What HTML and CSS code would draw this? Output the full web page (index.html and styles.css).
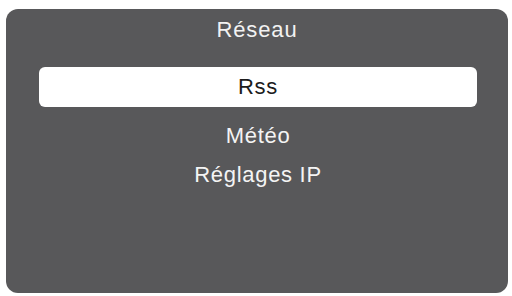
FILE: index.html
```html
<!DOCTYPE html>
<html>
<head>
<meta charset="utf-8">
<link rel="stylesheet" href="styles.css">
</head>
<body>
<div class="panel">
  <div class="title">Réseau</div>
  <div class="list">
    <div class="item selected">Rss</div>
    <div class="item first">Météo</div>
    <div class="item">Réglages IP</div>
  </div>
</div>
</body>
</html>
```
FILE: styles.css
```css
html, body {
  margin: 0;
  padding: 0;
  background: #ffffff;
}
body {
  width: 512px;
  height: 296px;
  padding: 9px 4px 3px 6px;
  box-sizing: border-box;
  font-family: "Liberation Sans", Arial, Helvetica, sans-serif;
}
.panel {
  width: 502px;
  height: 284px;
  background: #58585a;
  border-radius: 12px;
  display: flex;
  flex-direction: column;
  align-items: center;
}
.title {
  height: 41px;
  line-height: 41px;
  font-size: 22px;
  letter-spacing: 0.9px;
  color: #f2f2f2;
  text-align: center;
}
.list {
  margin-top: 17px;
  margin-left: 2px;
  width: 438px;
  display: flex;
  flex-direction: column;
}
.item {
  height: 39px;
  line-height: 39px;
  font-size: 22px;
  letter-spacing: 0.7px;
  color: #f4f4f4;
  text-align: center;
}
.item.selected {
  height: 40px;
  line-height: 40px;
  background: #ffffff;
  color: #1c1c1c;
  border-radius: 6px;
}
.item.first {
  margin-top: 9px;
}
```
